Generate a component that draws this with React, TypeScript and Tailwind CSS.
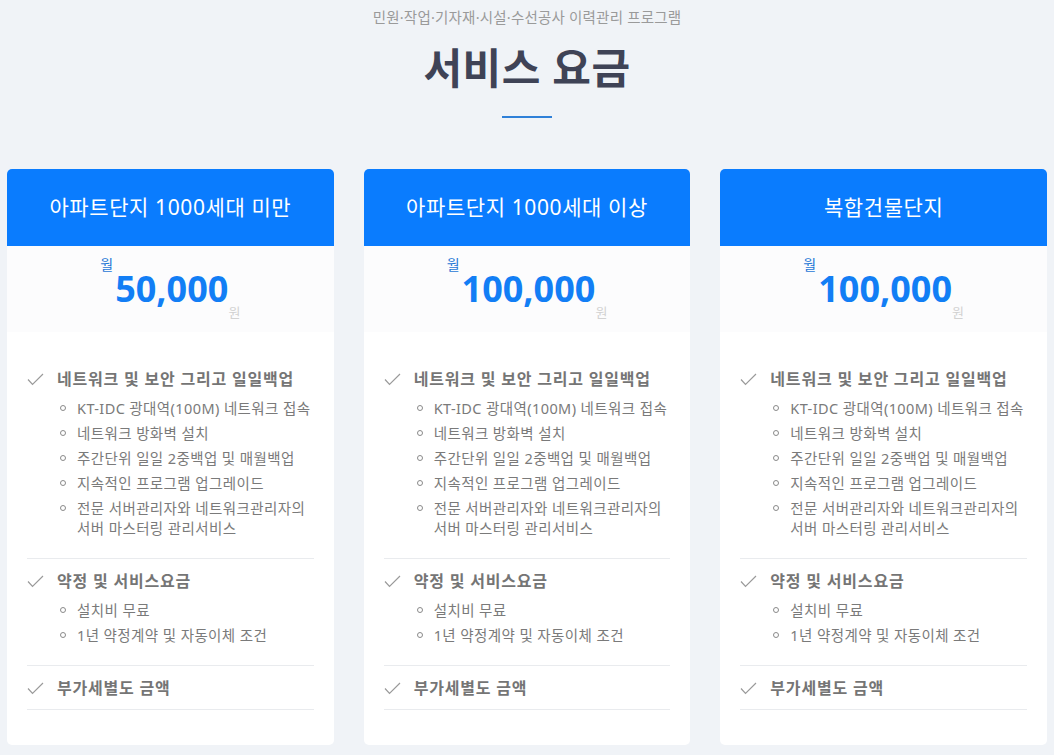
import React from "react";

type Section = { title: string; items: string[][] };

const sections: Section[] = [
  {
    title: "네트워크 및 보안 그리고 일일백업",
    items: [
      ["KT-IDC 광대역(100M) 네트워크 접속"],
      ["네트워크 방화벽 설치"],
      ["주간단위 일일 2중백업 및 매월백업"],
      ["지속적인 프로그램 업그레이드"],
      ["전문 서버관리자와 네트워크관리자의", "서버 마스터링 관리서비스"],
    ],
  },
  {
    title: "약정 및 서비스요금",
    items: [["설치비 무료"], ["1년 약정계약 및 자동이체 조건"]],
  },
  { title: "부가세별도 금액", items: [] },
];

const plans = [
  { name: "아파트단지 1000세대 미만", price: "50,000" },
  { name: "아파트단지 1000세대 이상", price: "100,000" },
  { name: "복합건물단지", price: "100,000" },
];

function Check() {
  return (
    <svg width="17" height="13" viewBox="0 0 17 13" className="shrink-0">
      <polyline points="1,6.5 5.5,11.5 16,1" fill="none" stroke="#9a9a9a" strokeWidth="1.2" />
    </svg>
  );
}

function Card({ name, price }: { name: string; price: string }) {
  return (
    <div className="flex-1 bg-white rounded-[5px] overflow-hidden flex flex-col pb-[35px]">
      <div className="h-[77px] bg-[#0a7cfe] flex items-center justify-center text-white text-[21px] tracking-[0.6px]">
        {name}
      </div>
      <div className="h-[86px] bg-[#fcfcfd] flex justify-center items-start pt-[9px]">
        <span className="text-[14px] leading-[20px] text-[#1f78d6]">월</span>
        <span className="mt-[13px] ml-[2px] text-[36px] leading-[42px] font-bold text-[#127ef5]">{price}</span>
        <span className="mt-[47px] text-[13px] leading-[20px] text-[#d2d2d2]">원</span>
      </div>
      <div className="px-[20px] pt-[25px]">
        {sections.map((s, i) => (
          <div key={i} className={`border-b border-[#e9ebee] pt-[10px] ${s.items.length ? "pb-[20px]" : "pb-[9px]"}`}>
            <div className="flex items-center h-[24px]">
              <Check />
              <span className="ml-[13px] text-[16px] tracking-[0.8px] font-bold text-[#757575] leading-[24px] whitespace-nowrap">{s.title}</span>
            </div>
            {s.items.length > 0 && (
              <div className="mt-[7px] flex flex-col gap-[5px]">
                {s.items.map((lines, j) => (
                  <div key={j} className="flex items-start pl-[33px]">
                    <span className="mt-[7px] w-[6px] h-[6px] rounded-full border border-[#8a8a8a] shrink-0" />
                    <span className="ml-[11px] text-[14.5px] tracking-[0.4px] leading-[20px] text-[#7a7a7a] whitespace-nowrap">
                      {lines.map((l, k) => (
                        <div key={k}>{l}</div>
                      ))}
                    </span>
                  </div>
                ))}
              </div>
            )}
          </div>
        ))}
      </div>
    </div>
  );
}

export default function App() {
  return (
    <div
      className="w-[1054px] h-[755px] bg-[#f0f3f7] flex flex-col items-center pt-[7px] px-[7px] overflow-hidden"
      style={{ fontFamily: '"Noto Sans", "Noto Sans CJK KR", sans-serif' }}
    >
      <div className="text-[14.5px] tracking-[0.2px] leading-[20px] text-[#9a9a9a]">민원·작업·기자재·시설·수선공사 이력관리 프로그램</div>
      <div className="mt-[16px] text-[42px] tracking-[0.5px] leading-[50px] font-bold text-[#3f4356]">서비스 요금</div>
      <div className="mt-[23px] w-[50px] h-[2px] bg-[#2f80d8]" />
      <div className="mt-[51px] w-full flex gap-[30px]">
        {plans.map((p) => (
          <Card key={p.name} name={p.name} price={p.price} />
        ))}
      </div>
    </div>
  );
}
